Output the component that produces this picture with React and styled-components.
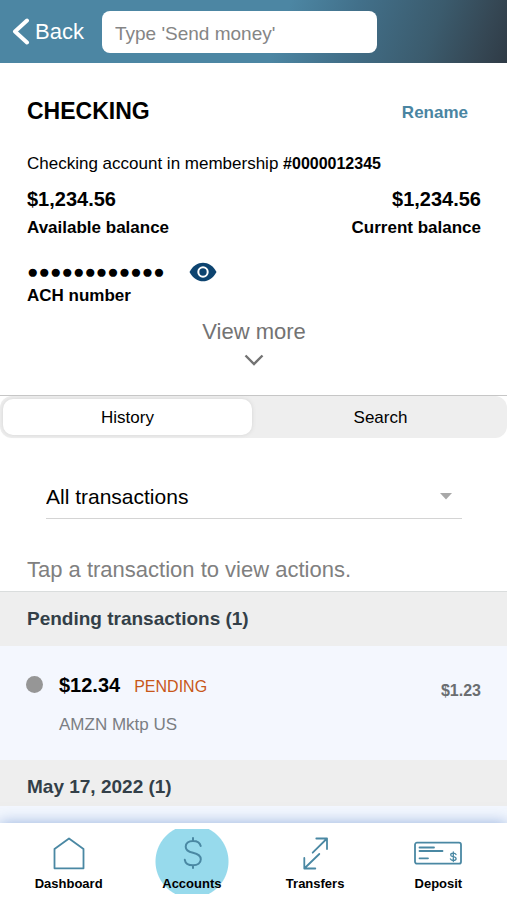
import { useState } from "react";
import styled, { createGlobalStyle } from "styled-components";

const GlobalStyle = createGlobalStyle`
  * {
    box-sizing: border-box;
  }
  body {
    margin: 0;
    background-color: white;
    font-family: "Liberation Sans", Arial, Helvetica, sans-serif;
    color: black;
  }
  button,
  input,
  select {
    font-family: inherit;
    color: inherit;
  }
`;

const Container = styled.div`
  min-height: 100vh;
  display: flex;
  flex-direction: column;
`;

const Header = styled.header`
  height: 63px;
  padding: 0 12px;
  display: flex;
  align-items: center;
  background: linear-gradient(
    110deg,
    #4c86a3 0%,
    #4c86a3 55%,
    #42708a 68%,
    #3b5b6d 84%,
    #354754 94%,
    #2f3b46 100%
  );
`;

const BackButton = styled.button`
  display: flex;
  align-items: center;
  gap: 5px;
  margin-right: 18px;
  padding: 0;
  border: none;
  background: none;
  color: white;
  font-size: 22px;
  line-height: 28px;
  cursor: pointer;
`;

const SearchInput = styled.input`
  width: 57%;
  height: 42px;
  padding: 4px 13px 0;
  border: none;
  border-radius: 8px;
  background-color: white;
  font-size: 19px;

  &::placeholder {
    color: #858585;
    opacity: 1;
  }
  &:focus {
    outline: none;
  }
`;

const Main = styled.main`
  flex: 1;
  display: flex;
  flex-direction: column;
`;

const Summary = styled.section`
  padding: 32px 26px 29px 27px;
  border-bottom: 1px solid #c6c6c6;
`;

const Row = styled.div`
  display: flex;
  align-items: center;
  justify-content: space-between;
`;

const Title = styled.h1`
  margin: 0;
  font-size: 23px;
  line-height: 32px;
`;

const RenameLink = styled.a`
  margin-right: 13px;
  padding-top: 4px;
  color: #4a85a2;
  font-size: 17px;
  font-weight: bold;
  line-height: 28px;
  text-decoration: none;
`;

const Desc = styled.p`
  margin: 26px 0 10px;
  font-size: 17px;
  line-height: 22px;
`;

const Membership = styled.b`
  font-size: 16px;
`;

const Balance = styled.div`
  display: flex;
  flex-direction: column;
  gap: 1px;
  text-align: ${(props) => props.$align || "left"};
`;

const Amount = styled.span`
  font-size: 20px;
  font-weight: bold;
  line-height: 28px;
`;

const Label = styled.span`
  font-size: 17px;
  font-weight: bold;
  line-height: 28px;
`;

const Ach = styled.div`
  display: flex;
  flex-direction: column;
  margin-top: 20px;
`;

const Masked = styled.div`
  display: flex;
  align-items: center;
  gap: 24px;
  height: 20px;
`;

const Dots = styled.span`
  font-size: 19px;
  line-height: 20px;
`;

const IconButton = styled.button`
  display: flex;
  padding: 0;
  border: none;
  background: none;
  cursor: pointer;
`;

const ViewMore = styled.button`
  display: flex;
  flex-direction: column;
  align-items: center;
  gap: 10px;
  margin: 10px auto 0;
  padding: 0;
  border: none;
  background: none;
  color: #737373;
  font-size: 22px;
  line-height: 24px;
  cursor: pointer;
`;

const Tabs = styled.div`
  display: flex;
  gap: 4px;
  padding: 3px 2px 3px 3px;
  border-radius: 12px;
  background-color: #eeeeee;
`;

const Tab = styled.button`
  flex: 1;
  height: 36px;
  border: none;
  border-radius: 10px;
  background-color: ${(props) => (props.$active ? "white" : "transparent")};
  box-shadow: ${(props) => (props.$active ? "0 0 4px #d4d4d4" : "none")};
  font-size: 17px;
  line-height: 36px;
  cursor: pointer;
`;

const Filter = styled.div`
  display: flex;
  align-items: center;
  margin: 37px 45px 0 46px;
  border-bottom: 1px solid #d4d4d4;
`;

const Select = styled.select`
  flex: 1;
  height: 43px;
  margin-right: -22px;
  padding: 0 22px 0 0;
  border: none;
  background: none;
  appearance: none;
  font-size: 21px;

  &:focus {
    outline: none;
  }
`;

const Arrow = styled.svg`
  margin-right: 10px;
  pointer-events: none;
`;

const Hint = styled.p`
  margin: 37px 26px 7px 27px;
  color: #808080;
  font-size: 22px;
  line-height: 28px;
`;

const GroupTitle = styled.h2`
  margin: 0;
  padding: ${(props) =>
    props.$first ? "13px 26px 13px 27px" : "13px 26px 5px 27px"};
  border-top: ${(props) => (props.$first ? "1px solid #dadddd" : "none")};
  background-color: #eeeeee;
  color: #333f48;
  font-size: 19px;
  line-height: 28px;
`;

const Transaction = styled.div`
  display: flex;
  justify-content: space-between;
  height: 114px;
  padding: 25px 26px 0;
  background-color: #f4f7fe;
`;

const Status = styled.span`
  flex: none;
  width: 17px;
  height: 17px;
  margin: 5px 16px 0 0;
  border-radius: 50%;
  background-color: #969696;
`;

const Details = styled.div`
  flex: 1;
`;

const Pending = styled.span`
  margin-left: 14px;
  color: #c8571a;
  font-size: 16px;
  line-height: 28px;
`;

const Merchant = styled.div`
  margin-top: 10px;
  color: #7b7e83;
  font-size: 17px;
  line-height: 28px;
`;

const Total = styled.span`
  margin-top: 6px;
  color: #6a6d70;
  font-size: 16px;
  font-weight: bold;
  line-height: 28px;
`;

const Rest = styled.div`
  flex: 1;
  min-height: 17px;
  background-color: #f3f7fe;
`;

const Nav = styled.nav`
  position: sticky;
  bottom: 0;
  display: flex;
  padding: 6px 7px;
  background-color: white;
  box-shadow: 0 0 14px rgba(60, 110, 190, 0.5);
`;

const NavItem = styled.a`
  flex: 1;
  display: flex;
  flex-direction: column;
  align-items: center;
  gap: 4px;
  height: 65px;
  padding-top: 6px;
  background: ${(props) =>
    props.$active
      ? "radial-gradient(circle at center, #97daec 36px, transparent 37px)"
      : "none"};
  color: black;
  font-size: 13px;
  font-weight: bold;
  line-height: 18px;
  text-decoration: none;
`;

const NavIcon = styled.svg`
  width: 50px;
  height: 36px;
  fill: none;
  stroke: #4a88a3;
  stroke-width: 1.8;
  stroke-linecap: round;
  stroke-linejoin: round;
`;

const navItems = [
  {
    name: "Dashboard",
    icon: <path d="M10.5 14 L25 3.5 L39.5 14 V33.3 H10.5 Z" />,
  },
  {
    name: "Accounts",
    icon: (
      <path
        strokeWidth="2"
        d="M26 3 V6 M26 30.3 V33 M33.7 11 C33 8 30 6 26 6 C21.500 6 18.700 8.400 18.700 11.700 C18.700 15.500 22 16.900 26 17.800 C30.500 18.800 33.800 20.300 33.800 24.300 C33.800 28 30.500 30.300 26 30.300 C21.500 30.300 18.300 28 17.800 24.800"
      />
    ),
  },
  {
    name: "Transfers",
    icon: (
      <path d="M26.300 3.500 H37 V14 M37 3.500 L22.700 17.700 M14.300 23 V33.500 H25.300 M14.300 33.500 L29.300 19" />
    ),
  },
  {
    name: "Deposit",
    icon: (
      <>
        <rect x="2" y="7.700" width="46" height="21" rx="2" />
        <path d="M6.500 12.500 H21 M6.500 16 H29.500 M6.500 23.300 H15" />
        <path
          strokeWidth="1.3"
          d="M40.300 17 V26.500 M43 19.600 C42.600 18.700 41.600 18.200 40.300 18.200 C38.700 18.200 37.700 18.900 37.700 19.900 C37.700 21.100 38.900 21.400 40.300 21.700 C41.900 22 43.100 22.500 43.100 23.700 C43.100 24.800 42 25.500 40.300 25.500 C38.800 25.500 37.700 24.900 37.400 23.900"
        />
      </>
    ),
  },
];

const App = () => {
  const [tab, setTab] = useState("History");

  return (
    <Container>
      <GlobalStyle />
      <Header>
        <BackButton>
          <svg width="18" height="28" viewBox="0 0 18 28" fill="none">
            <path
              d="M15 2.500 L3 13.500 L15 24.500"
              stroke="white"
              strokeWidth="4"
              strokeLinecap="round"
              strokeLinejoin="round"
            />
          </svg>
          Back
        </BackButton>
        <SearchInput
          type="text"
          aria-label="Type a command"
          placeholder="Type 'Send money'"
        />
      </Header>

      <Main>
        <Summary>
          <Row>
            <Title>CHECKING</Title>
            <RenameLink href="#rename">Rename</RenameLink>
          </Row>
          <Desc>
            Checking account in membership <Membership>#0000012345</Membership>
          </Desc>
          <Row>
            <Balance>
              <Amount>$1,234.56</Amount>
              <Label>Available balance</Label>
            </Balance>
            <Balance $align="right">
              <Amount>$1,234.56</Amount>
              <Label>Current balance</Label>
            </Balance>
          </Row>
          <Ach>
            <Masked>
              <Dots>●●●●●●●●●●●●</Dots>
              <IconButton aria-label="Show ACH number">
                <svg width="28" height="20" viewBox="0 0 28 20">
                  <path
                    d="M0.500 10 C4 3.500 8.800 0.700 14 0.700 C19.200 0.700 24 3.500 27.500 10 C24 16.500 19.200 19.300 14 19.300 C8.800 19.300 4 16.500 0.500 10 Z"
                    fill="#0d4470"
                  />
                  <circle
                    cx="14"
                    cy="10"
                    r="4.7"
                    fill="none"
                    stroke="white"
                    strokeWidth="2"
                  />
                </svg>
              </IconButton>
            </Masked>
            <Label>ACH number</Label>
          </Ach>
          <ViewMore>
            View more
            <svg width="20" height="12" viewBox="0 0 20 12" fill="none">
              <path d="M1.500 1.500 L10 10 L18.500 1.500" stroke="#737373" strokeWidth="2.4" />
            </svg>
          </ViewMore>
        </Summary>

        <Tabs role="tablist">
          {["History", "Search"].map((name) => (
            <Tab
              key={name}
              role="tab"
              aria-selected={tab === name}
              $active={tab === name}
              onClick={() => setTab(name)}
            >
              {name}
            </Tab>
          ))}
        </Tabs>

        <Filter>
          <Select aria-label="Filter transactions">
            <option>All transactions</option>
          </Select>
          <Arrow width="12" height="7" viewBox="0 0 12 7">
            <path d="M0 0 H12 L6 6.500 Z" fill="#a8a8a8" />
          </Arrow>
        </Filter>
        <Hint>Tap a transaction to view actions.</Hint>

        <GroupTitle $first>Pending transactions (1)</GroupTitle>
        <Transaction>
          <Status />
          <Details>
            <Amount>$12.34</Amount>
            <Pending>PENDING</Pending>
            <Merchant>AMZN Mktp US</Merchant>
          </Details>
          <Total>$1.23</Total>
        </Transaction>
        <GroupTitle>May 17, 2022 (1)</GroupTitle>
        <Rest />
      </Main>

      <Nav>
        {navItems.map((item) => (
          <NavItem
            key={item.name}
            href={`#${item.name.toLowerCase()}`}
            $active={item.name === "Accounts"}
          >
            <NavIcon viewBox="0 0 50 36">{item.icon}</NavIcon>
            {item.name}
          </NavItem>
        ))}
      </Nav>
    </Container>
  );
};

export default App;
